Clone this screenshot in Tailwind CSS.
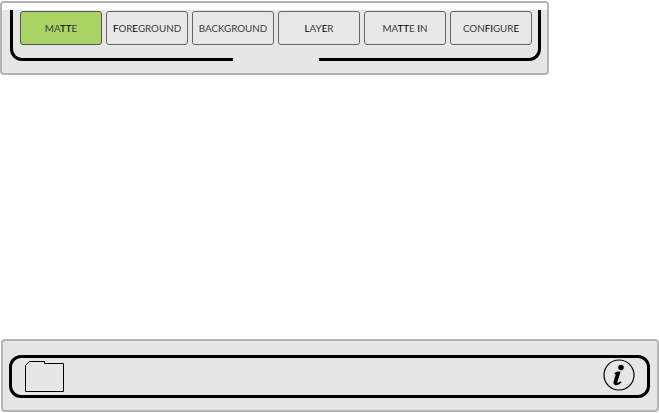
<!DOCTYPE html>
<html lang="en">
<head>
    <meta charset="UTF-8" />
    <meta name="viewport" content="width=device-width, initial-scale=1.0" />
    <title>Matte panel</title>
    <script src="https://cdn.jsdelivr.net/npm/@tailwindcss/browser@4"></script>
</head>
<body class="bg-white h-[413px] w-[659px] overflow-hidden font-['Lato','Open_Sans',sans-serif]">

    <!-- top panel -->
    <div class="w-[549px] h-[74px] mt-px border-2 border-[#b4b4b4] rounded-[4px] bg-[#e6e6e6] overflow-hidden">
        <div class="h-[7px] bg-white"></div>
        <div class="relative ml-[8px] w-[531px] h-[51px] border-l-[3px] border-r-[3px] border-b-[3px] border-black rounded-b-[12px] pl-[7px] pt-px">
            <div class="flex gap-[4px] text-[9.8px] text-[#3c3c3c]">
                <button class="w-[82px] h-[34px] bg-[#a9d464] border border-[#555] rounded-[3px]">MA<span class="text-black">TT</span>E</button>
                <button class="w-[82px] h-[34px] bg-[#e8e8e8] border border-[#666] rounded-[3px]"><span class="text-black">F</span>OR<span class="text-black">E</span>GROUND</button>
                <button class="w-[82px] h-[34px] bg-[#e8e8e8] border border-[#666] rounded-[3px]">BACKGROUND</button>
                <button class="w-[82px] h-[34px] bg-[#e8e8e8] border border-[#666] rounded-[3px]"><span class="text-black">L</span>AY<span class="text-black">E</span>R</button>
                <button class="w-[82px] h-[34px] bg-[#e8e8e8] border border-[#666] rounded-[3px]">MA<span class="text-black">TT</span>E <span class="text-black">I</span>N</button>
                <button class="w-[82px] h-[34px] bg-[#e8e8e8] border border-[#666] rounded-[3px]">CON<span class="text-black">FI</span>GUR<span class="text-black">E</span></button>
            </div>
            <span class="absolute left-[220px] -bottom-[3px] w-[86px] h-[3px] bg-[#e6e6e6]"></span>
        </div>
    </div>

    <!-- bottom panel -->
    <div class="mt-[264px] ml-px w-[658px] h-[73px] border-2 border-[#b4b4b4] rounded-[4px] bg-[#e6e6e6] pt-[14px] pl-[6px] pr-[7px]">
        <div class="h-[43px] border-[3px] border-black rounded-[12px] flex items-center justify-between pl-[13px] pr-[12px]">
            <svg width="39" height="31" viewBox="0 0 39 31" fill="none" stroke="#000" stroke-width="1">
                <path d="M0.5 30.5V4.5L4.5 0.5H19.5V2.5H38.5V30.5Z" />
            </svg>
            <svg class="mb-[3px]" width="32" height="32" viewBox="0 0 32 32" fill="none">
                <circle cx="16" cy="16" r="15" stroke="#000" stroke-width="1.2" />
                <circle cx="18" cy="8.5" r="2.8" fill="#000" />
                <path d="M11.5 14.5C13 12.5 16 12 17.5 13L14.5 22.5C14.2 24 15.2 24.3 17.5 22.3L18.5 23.3C15.5 27 10 27.5 10.5 23L12.8 15.2L11.5 15.5Z" fill="#000" />
            </svg>
        </div>
    </div>

</body>
</html>
